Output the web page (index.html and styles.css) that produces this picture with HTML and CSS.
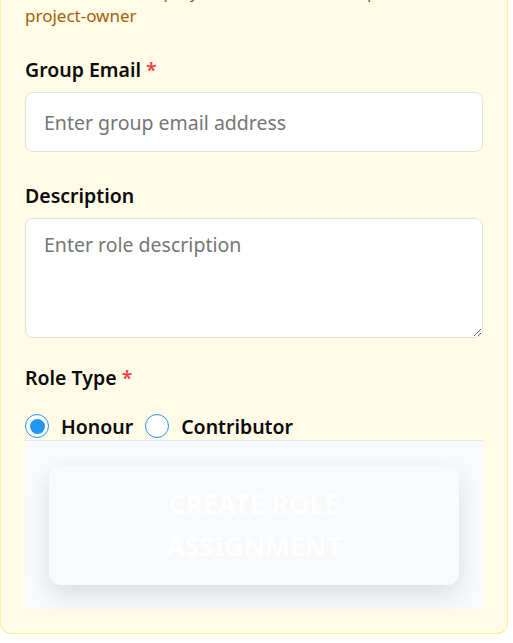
FILE: index.html
```html
<!DOCTYPE html>
<html lang="en">
<head>
<meta charset="utf-8">
<title>Create Role Assignment</title>
<link rel="stylesheet" href="styles.css">
</head>
<body>
<div class="viewport">
  <form class="card">
    <div class="field field-top">
      <p class="hint-lead">Enter a name for project members that map</p>
      <p class="hint">project-owner</p>
    </div>
    <div class="field field-email">
      <label class="label" for="email">Group Email <span class="req">*</span></label>
      <input class="input" id="email" type="email" placeholder="Enter group email address">
    </div>
    <div class="field field-desc">
      <label class="label" for="desc">Description</label>
      <textarea class="input textarea" id="desc" placeholder="Enter role description"></textarea>
    </div>
    <div class="field field-type">
      <div class="label">Role Type <span class="req">*</span></div>
      <div class="radios">
        <label class="radio"><input type="radio" name="type" checked><span>Honour</span></label>
        <label class="radio"><input type="radio" name="type"><span>Contributor</span></label>
      </div>
    </div>
    <div class="actions">
      <button type="button" class="submit">CREATE ROLE ASSIGNMENT</button>
    </div>
  </form>
</div>
</body>
</html>
```
FILE: styles.css
```css
html, body {
  margin: 0;
  padding: 0;
  background: #ffffff;
}
body {
  font-family: "Noto Sans", "Open Sans", sans-serif;
  color: #111111;
}
.viewport {
  height: 643px;
  overflow: hidden;
}
.card {
  width: 458px;
  margin-top: -20px;
  padding: 0 24px 24px 24px;
  background: #fffbe7;
  border: 1px solid #fbee9c;
  border-radius: 0 0 11px 11px;
  border-top: none;
  display: flex;
  flex-direction: column;
}
.field {
  display: flex;
  flex-direction: column;
}
.field-top {
  margin-bottom: 28px;
}
.field-email {
  margin-bottom: 30px;
}
.field-desc {
  margin-bottom: 26px;
}
.hint-lead, .hint {
  margin: 0;
  font-size: 17px;
  line-height: 24px;
  color: #a16207;
  white-space: nowrap;
}
.label {
  font-size: 19.5px;
  line-height: 28px;
  font-weight: 600;
  color: #0b0b0b;
  margin-bottom: 8px;
}
.req {
  color: #ef4444;
}
.input {
  box-sizing: border-box;
  width: 100%;
  height: 60px;
  margin: 0;
  padding: 0 18px;
  font-family: inherit;
  font-size: 19.5px;
  color: #111;
  background: #ffffff;
  border: 1px solid #e5e2d8;
  border-radius: 8px;
  outline: none;
}
.input::placeholder {
  color: #757575;
}
.textarea {
  height: 120px;
  padding-top: 12px;
  line-height: 28px;
  display: block;
  resize: vertical;
}
.radios {
  display: flex;
  align-items: center;
  gap: 12px;
  margin-top: 14px;
  height: 24px;
}
.radio {
  display: flex;
  align-items: center;
  gap: 12px;
  font-size: 19.5px;
  font-weight: 600;
  color: #0b0b0b;
}
.radio input {
  appearance: none;
  -webkit-appearance: none;
  width: 24px;
  height: 24px;
  margin: 0;
  border: 1.5px solid #2196f3;
  border-radius: 50%;
  background: #ffffff;
  box-sizing: border-box;
  display: grid;
  place-items: center;
}
.radio input:checked::after {
  content: "";
  width: 15px;
  height: 15px;
  border-radius: 50%;
  background: #2196f3;
}
.actions {
  margin-top: 2px;
  background: #f8fafc;
  border-top: 1px solid #e4e7eb;
  padding: 24px;
  display: flex;
}
.submit {
  flex: 1;
  height: 120px;
  border: none;
  border-radius: 12px;
  background: #f8fafc;
  box-shadow: 0 10px 25px rgba(0, 0, 0, 0.12);
  color: #ffffff;
  font-family: inherit;
  font-size: 26.5px;
  font-weight: 700;
  line-height: 42px;
  padding: 0 70px;
}
```
